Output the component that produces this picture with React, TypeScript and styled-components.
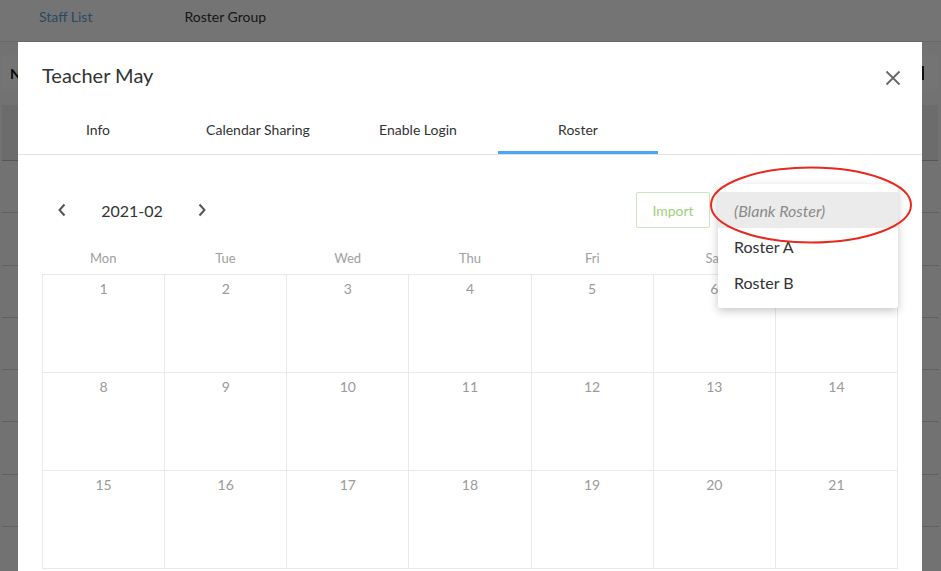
import React from "react";
import styled, { createGlobalStyle, css } from "styled-components";

const GlobalStyle = createGlobalStyle`
  html, body, #root { height: 100%; }
  body {
    margin: 0;
    font-family: Lato, "Noto Sans", "Liberation Sans", sans-serif;
    background: #ffffff;
    color: #333;
    overflow: hidden;
  }
  * { box-sizing: border-box; }
`;

/* ---------- background page ---------- */
const Page = styled.div`
  height: 100%;
  display: flex;
  flex-direction: column;
  background: #fbfbfb;
`;

const TopNav = styled.nav`
  height: 42px;
  flex-shrink: 0;
  display: flex;
  align-items: flex-start;
  padding: 8px 0 0 39px;
  gap: 92px;
  background: #fff;
  border-bottom: 1px solid #e6e6e6;
`;

const NavItem = styled.span<{ $active?: boolean }>`
  font-size: 14px;
  line-height: 18px;
  color: ${(p) => (p.$active ? "#5b9fe0" : "#333")};
`;

const Table = styled.div`
  margin: 13px 3px 0 2px;
  display: flex;
  flex-direction: column;
`;

const HeadRow = styled.div`
  height: 36px;
  flex-shrink: 0;
  display: flex;
  align-items: center;
  padding-left: 8px;
  background: #fff;
  font-size: 14px;
  font-weight: 700;
  color: #111;
  margin-bottom: 14px;
  justify-content: space-between;
`;

const HeadMark = styled.span`
  width: 2px;
  height: 14px;
  background: #222;
  margin-right: 14px;
`;

const BodyRow = styled.div<{ $shade?: boolean; $h: number }>`
  height: ${(p) => p.$h}px;
  flex-shrink: 0;
  border-bottom: 1px solid ${(p) => (p.$shade ? "#bdbdbd" : "#d6d6d6")};
  background: ${(p) => (p.$shade ? "#eeeeee" : "#fafafa")};
`;

const Overlay = styled.div`
  position: fixed;
  inset: 0;
  background: rgba(0, 0, 0, 0.545);
`;

/* ---------- modal ---------- */
const Modal = styled.div`
  position: absolute;
  left: 18px;
  top: 42px;
  width: 904px;
  background: #fff;
  display: flex;
  flex-direction: column;
`;

const ModalHeader = styled.div`
  height: 63px;
  flex-shrink: 0;
  padding: 20px 20px 0 24px;
  display: flex;
  align-items: flex-start;
  justify-content: space-between;
`;

const Title = styled.h2`
  margin: 0;
  font-size: 20px;
  line-height: 26px;
  font-weight: 400;
  color: #333;
`;

const CloseButton = styled.button`
  border: 0;
  background: none;
  padding: 0;
  margin-top: 7px;
  width: 18px;
  height: 18px;
  display: flex;
  align-items: center;
  justify-content: center;
  cursor: pointer;
`;

const TabBar = styled.div`
  height: 50px;
  flex-shrink: 0;
  display: flex;
  border-bottom: 1px solid #e2e2e2;
`;

const Tab = styled.div<{ $active?: boolean }>`
  position: relative;
  width: 160px;
  display: flex;
  align-items: center;
  justify-content: center;
  font-size: 14px;
  color: #333;
  ${(p) =>
    p.$active &&
    css`
      &::after {
        content: "";
        position: absolute;
        left: 0;
        right: 0;
        bottom: 0;
        height: 3px;
        background: #4aa8ee;
      }
    `}
`;

const ModalBody = styled.div`
  padding: 37px 24px 40px;
  display: flex;
  flex-direction: column;
`;

const Toolbar = styled.div`
  height: 36px;
  display: flex;
  align-items: center;
`;

const MonthNav = styled.div`
  display: flex;
  align-items: center;
`;

const ArrowButton = styled.button`
  width: 40px;
  height: 36px;
  border: 0;
  background: none;
  padding: 0;
  display: flex;
  align-items: center;
  justify-content: center;
  cursor: pointer;
`;

const MonthLabel = styled.span`
  width: 100px;
  text-align: center;
  font-size: 16px;
  color: #333;
`;

const Spacer = styled.div`
  flex: 1;
`;

const ImportButton = styled.button`
  width: 74px;
  height: 36px;
  border: 1px solid #cde6bd;
  background: #fff;
  color: #9fcf7c;
  font-family: inherit;
  font-size: 14px;
  border-radius: 2px;
  padding: 0;
`;

const SelectWrap = styled.div`
  position: relative;
  width: 180px;
  height: 36px;
  margin-left: 8px;
`;

const Menu = styled.ul`
  position: absolute;
  left: 0;
  top: -8px;
  width: 180px;
  margin: 0;
  padding: 8px 0;
  list-style: none;
  background: #fff;
  box-shadow: 0 3px 10px rgba(0, 0, 0, 0.22);
  border-radius: 2px;
  z-index: 2;
`;

const MenuItem = styled.li<{ $blank?: boolean }>`
  height: 36px;
  display: flex;
  align-items: center;
  padding-left: 16px;
  font-size: 16px;
  color: #333;
  ${(p) =>
    p.$blank &&
    css`
      font-style: italic;
      color: #8a8a8a;
      background: #ebebeb;
    `}
`;

const Highlight = styled.svg`
  position: absolute;
  left: -9px;
  top: -26px;
  width: 204px;
  height: 80px;
  z-index: 3;
  overflow: visible;
  pointer-events: none;
`;

const WeekHeader = styled.div`
  margin-top: 14px;
  height: 32px;
  display: grid;
  grid-template-columns: repeat(7, 1fr);
  align-items: center;
`;

const WeekDay = styled.span`
  text-align: center;
  font-size: 13px;
  color: #a0a0a0;
`;

const Grid = styled.div`
  display: grid;
  grid-template-columns: repeat(7, 1fr);
  grid-auto-rows: 98px;
  border-top: 1px solid #e9e9e9;
  border-left: 1px solid #e9e9e9;
`;

const Cell = styled.div`
  border-right: 1px solid #e9e9e9;
  border-bottom: 1px solid #e9e9e9;
  padding-top: 4px;
  text-align: center;
  font-size: 14px;
  line-height: 20px;
  color: #9a9a9a;
`;

const ChevronLeft = () => (
  <svg width="10" height="14" viewBox="0 0 10 14">
    <path d="M7.5 1.5 L2.5 7 L7.5 12.5" fill="none" stroke="#555" strokeWidth="2" />
  </svg>
);
const ChevronRight = () => (
  <svg width="10" height="14" viewBox="0 0 10 14">
    <path d="M2.5 1.5 L7.5 7 L2.5 12.5" fill="none" stroke="#555" strokeWidth="2" />
  </svg>
);

const weekdays = ["Mon", "Tue", "Wed", "Thu", "Fri", "Sat", "Sun"];
const days = Array.from({ length: 21 }, (_, i) => i + 1);
const rowHeights = [56, 52, 53, 52, 52, 52, 53, 52];

export default function App() {
  return (
    <>
      <GlobalStyle />
      <Page>
        <TopNav>
          <NavItem $active>Staff List</NavItem>
          <NavItem>Roster Group</NavItem>
        </TopNav>
        <Table>
          <HeadRow>
            <span>N</span>
            <HeadMark />
          </HeadRow>
          {rowHeights.map((h, i) => (
            <BodyRow key={i} $h={h} $shade={i === 0} />
          ))}
        </Table>
      </Page>
      <Overlay />
      <Modal>
        <ModalHeader>
          <Title>Teacher May</Title>
          <CloseButton aria-label="Close">
            <svg width="16" height="16" viewBox="0 0 16 16">
              <path d="M1.5 1.5 L14.5 14.5 M14.5 1.5 L1.5 14.5" stroke="#666" strokeWidth="1.8" />
            </svg>
          </CloseButton>
        </ModalHeader>
        <TabBar>
          <Tab>Info</Tab>
          <Tab>Calendar Sharing</Tab>
          <Tab>Enable Login</Tab>
          <Tab $active>Roster</Tab>
        </TabBar>
        <ModalBody>
          <Toolbar>
            <MonthNav>
              <ArrowButton aria-label="Previous month">
                <ChevronLeft />
              </ArrowButton>
              <MonthLabel>2021-02</MonthLabel>
              <ArrowButton aria-label="Next month">
                <ChevronRight />
              </ArrowButton>
            </MonthNav>
            <Spacer />
            <ImportButton>Import</ImportButton>
            <SelectWrap>
              <Menu>
                <MenuItem $blank>(Blank Roster)</MenuItem>
                <MenuItem>Roster A</MenuItem>
                <MenuItem>Roster B</MenuItem>
              </Menu>
              <Highlight viewBox="0 0 204 80">
                <ellipse cx="102" cy="39" rx="100" ry="37.5" fill="none" stroke="#e8291d" strokeWidth="2" />
              </Highlight>
            </SelectWrap>
          </Toolbar>
          <WeekHeader>
            {weekdays.map((d) => (
              <WeekDay key={d}>{d}</WeekDay>
            ))}
          </WeekHeader>
          <Grid>
            {days.map((d) => (
              <Cell key={d}>{d}</Cell>
            ))}
          </Grid>
        </ModalBody>
      </Modal>
    </>
  );
}
